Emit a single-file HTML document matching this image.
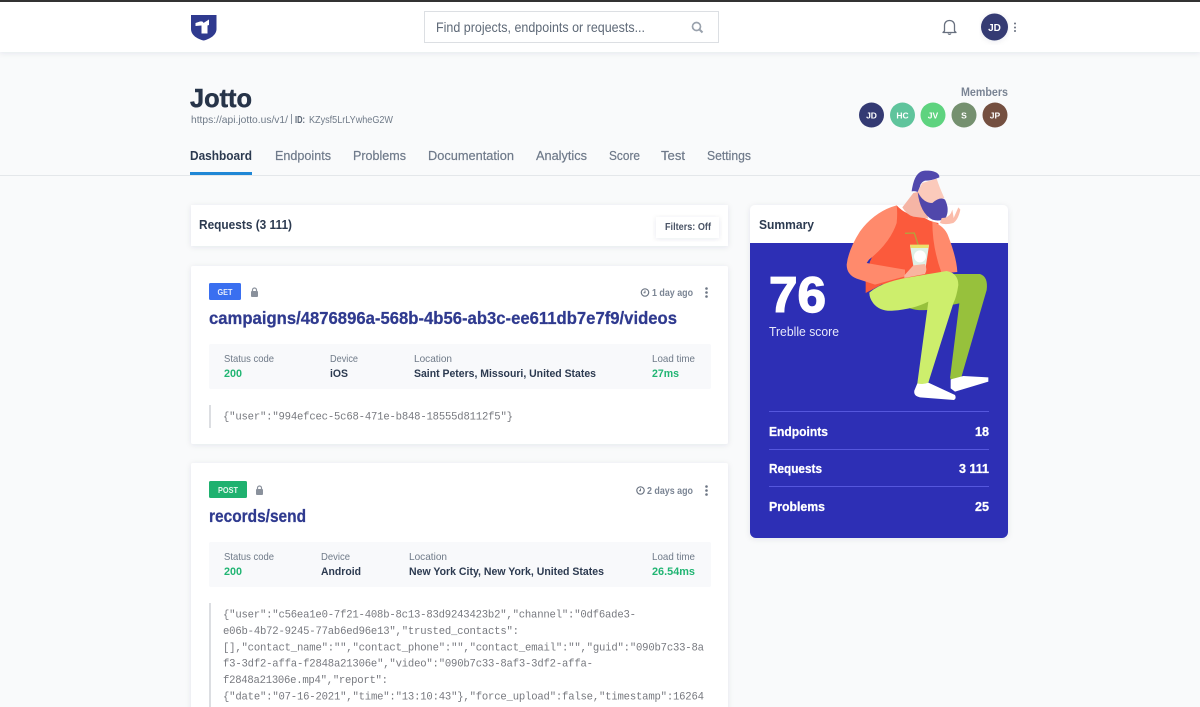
<!DOCTYPE html>
<html><head><meta charset="utf-8"><title>Jotto</title>
<style>
html,body{margin:0;padding:0;background:#f9fafb;width:1200px;height:707px;overflow:hidden}
svg{display:block;filter:blur(.3px)}
text{font-family:"Liberation Sans",sans-serif}
.b{font-weight:700}
.m{font-family:"Liberation Mono",monospace;font-size:10.6px;fill:#77797f}
.l{font-size:10.5px;fill:#6f7a88}
.v{font-size:11px;font-weight:700;fill:#2c3a50}
.g{font-size:11px;font-weight:700;fill:#21b573}
.t{font-size:13px;fill:#6f7a8a;stroke:#6f7a8a;stroke-width:.2px}
.w{fill:#fff;font-weight:700;font-size:13px;stroke:#fff;stroke-width:.25px}
.a{fill:#fff;font-weight:700;font-size:8.5px;text-anchor:middle}
</style></head><body>
<svg width="1200" height="707" viewBox="0 0 1200 707" xmlns="http://www.w3.org/2000/svg">
<defs>
<filter id="s" x="-5%" y="-10%" width="110%" height="125%"><feDropShadow dx="0" dy="1" stdDeviation="3" flood-color="#1c2a4a" flood-opacity=".09"/></filter>
<clipPath id="sumclip"><path d="M750 243H1008V532a6 6 0 0 1-6 6H756a6 6 0 0 1-6-6Z"/></clipPath>
</defs>
<rect width="1200" height="707" fill="#f9fafb"/>
<rect width="1200" height="52" fill="#fff" filter="url(#s)"/>
<rect width="1200" height="2" fill="#333"/>
<!-- logo -->
<path d="M191 15H216.500V29C216.500 35 210 39 203.700 40.500C197 39 191 35 191 29Z" fill="#2f3a8f"/>
<path d="M195.500 23L200 21.500Q203 21 203.500 23L209 19.500V25L207.500 25.500V33.500H201.500V25.500L195.500 26Z" fill="#fff"/>
<!-- search -->
<rect x="424.500" y="11.500" width="294" height="31" fill="#fff" stroke="#dcdfe3"/>
<text x="436" y="32" font-size="14" fill="#5f6a78" textLength="209" lengthAdjust="spacingAndGlyphs">Find projects, endpoints or requests...</text>
<circle cx="696.500" cy="26.500" r="4" fill="none" stroke="#9aa2ad" stroke-width="1.700"/>
<path d="M699.500 29.500L702.500 32.500" stroke="#9aa2ad" stroke-width="2"/>
<!-- bell -->
<path d="M944.500 31V25.500C944.500 22.500 946.500 20.500 949.500 20.500C952.500 20.500 954.500 22.500 954.500 25.500V31L956 32.500H943Z" fill="none" stroke="#68707f" stroke-width="1.300" stroke-linejoin="round"/>
<path d="M948 33.500a1.700 1.700 0 0 0 3 0" fill="none" stroke="#68707f" stroke-width="1.200"/>
<!-- user avatar -->
<circle cx="994.500" cy="27" r="13.500" fill="#343a73" filter="url(#s)"/>
<text x="994.500" y="31" class="a" style="font-size:10px">JD</text>
<circle cx="1015" cy="23.500" r="1" fill="#68707f"/><circle cx="1015" cy="27.500" r="1" fill="#68707f"/><circle cx="1015" cy="31" r="1" fill="#68707f"/>
<!-- title -->
<text x="190" y="107" class="b" font-size="26" fill="#273449" stroke="#273449" stroke-width=".5" textLength="62" lengthAdjust="spacingAndGlyphs">Jotto</text>
<text x="191" y="123" font-size="10.500" fill="#6f7a88" textLength="97" lengthAdjust="spacingAndGlyphs">https://api.jotto.us/v1/</text>
<rect x="291" y="114" width="1" height="10" fill="#8a93a0"/>
<text x="295" y="123" font-size="10.500" fill="#5a6574" class="b" textLength="10" lengthAdjust="spacingAndGlyphs">ID:</text>
<text x="309" y="123" font-size="10.500" fill="#6f7a88" textLength="84" lengthAdjust="spacingAndGlyphs">KZysf5LrLYwheG2W</text>
<!-- members -->
<text x="961" y="96" class="b" font-size="12" fill="#7a8494" textLength="47" lengthAdjust="spacingAndGlyphs">Members</text>
<circle cx="871.500" cy="115" r="12.500" fill="#343a73"/><text x="871.500" y="118.500" class="a">JD</text>
<circle cx="902.500" cy="115" r="12.500" fill="#5fc49c"/><text x="902.500" y="118.500" class="a">HC</text>
<circle cx="933" cy="115" r="12.500" fill="#5ed37f"/><text x="933" y="118.500" class="a">JV</text>
<circle cx="964" cy="115" r="12.500" fill="#75906f"/><text x="964" y="118.500" class="a">S</text>
<circle cx="995" cy="115" r="12.500" fill="#744f40"/><text x="995" y="118.500" class="a">JP</text>
<!-- tabs -->
<rect y="175" width="1200" height="1" fill="#e4e7ea"/>
<text x="190" y="160" class="b" font-size="13" fill="#2c3a50" textLength="62" lengthAdjust="spacingAndGlyphs">Dashboard</text>
<rect x="190" y="172" width="62" height="3" fill="#1f87d6"/>
<text x="275" y="160" class="t" textLength="56" lengthAdjust="spacingAndGlyphs">Endpoints</text>
<text x="353" y="160" class="t" textLength="53" lengthAdjust="spacingAndGlyphs">Problems</text>
<text x="428" y="160" class="t" textLength="86" lengthAdjust="spacingAndGlyphs">Documentation</text>
<text x="536" y="160" class="t" textLength="51" lengthAdjust="spacingAndGlyphs">Analytics</text>
<text x="609" y="160" class="t" textLength="31" lengthAdjust="spacingAndGlyphs">Score</text>
<text x="661" y="160" class="t" textLength="24" lengthAdjust="spacingAndGlyphs">Test</text>
<text x="707" y="160" class="t" textLength="44" lengthAdjust="spacingAndGlyphs">Settings</text>
<!-- requests header -->
<rect x="191" y="205" width="537" height="41" fill="#fff" filter="url(#s)"/>
<text x="199" y="229" class="b" font-size="13" fill="#2c3a50" textLength="93" lengthAdjust="spacingAndGlyphs">Requests (3 111)</text>
<rect x="656" y="217" width="63" height="21" fill="#fff" filter="url(#s)"/>
<text x="665" y="230" class="b" font-size="10.500" fill="#4a5466" textLength="46" lengthAdjust="spacingAndGlyphs">Filters: Off</text>
<!-- card 1 -->
<rect x="191" y="266" width="537" height="178" rx="2" fill="#fff" filter="url(#s)"/>
<rect x="209" y="283" width="32" height="17" rx="1.500" fill="#3a6ff0"/>
<text x="225" y="295" font-size="8.500" fill="#e8eefc" text-anchor="middle" class="b" textLength="15" lengthAdjust="spacingAndGlyphs">GET</text>
<rect x="251" y="291" width="7" height="6" rx="1" fill="#8a919c"/><path d="M252.500 291.500V290a2 2 0 0 1 4 0V291.500" fill="none" stroke="#8a919c" stroke-width="1.200"/>
<circle cx="645" cy="292.500" r="3.700" fill="none" stroke="#6c7583" stroke-width="1.200"/><path d="M645 290.500V292.800H643.500" fill="none" stroke="#6c7583"/>
<text x="652" y="296" class="b" font-size="10.500" fill="#7b8594" textLength="41" lengthAdjust="spacingAndGlyphs">1 day ago</text>
<circle cx="706.500" cy="288.500" r="1.300" fill="#6c7583"/><circle cx="706.500" cy="292.500" r="1.300" fill="#6c7583"/><circle cx="706.500" cy="296.500" r="1.300" fill="#6c7583"/>
<text x="209" y="324" class="b" font-size="17.500" fill="#2f3a8f" stroke="#2f3a8f" stroke-width=".25" textLength="468" lengthAdjust="spacingAndGlyphs">campaigns/4876896a-568b-4b56-ab3c-ee611db7e7f9/videos</text>
<rect x="209" y="344" width="502" height="45" rx="2" fill="#f8f9fb"/>
<text x="224" y="362" class="l" textLength="50" lengthAdjust="spacingAndGlyphs">Status code</text>
<text x="330" y="362" class="l" textLength="28" lengthAdjust="spacingAndGlyphs">Device</text>
<text x="414" y="362" class="l" textLength="38" lengthAdjust="spacingAndGlyphs">Location</text>
<text x="652" y="362" class="l" textLength="43" lengthAdjust="spacingAndGlyphs">Load time</text>
<text x="224" y="377" class="g" textLength="18" lengthAdjust="spacingAndGlyphs">200</text>
<text x="330" y="377" class="v" textLength="18" lengthAdjust="spacingAndGlyphs">iOS</text>
<text x="414" y="377" class="v" textLength="182" lengthAdjust="spacingAndGlyphs">Saint Peters, Missouri, United States</text>
<text x="652" y="377" class="g" textLength="27" lengthAdjust="spacingAndGlyphs">27ms</text>
<rect x="209" y="405" width="2" height="23" fill="#dcdee2"/>
<text x="223" y="419.500" class="m" textLength="290">{"user":"994efcec-5c68-471e-b848-18555d8112f5"}</text>
<!-- card 2 -->
<rect x="191" y="463" width="537" height="260" rx="2" fill="#fff" filter="url(#s)"/>
<rect x="209" y="481" width="38" height="17" rx="1.500" fill="#1fb16f"/>
<text x="228" y="493" font-size="8.500" fill="#e6f7ee" text-anchor="middle" class="b" textLength="20" lengthAdjust="spacingAndGlyphs">POST</text>
<rect x="256" y="489" width="7" height="6" rx="1" fill="#8a919c"/><path d="M257.500 489.500V488a2 2 0 0 1 4 0V489.500" fill="none" stroke="#8a919c" stroke-width="1.200"/>
<circle cx="640.500" cy="490.500" r="3.700" fill="none" stroke="#6c7583" stroke-width="1.200"/><path d="M640.500 488.500V490.800H639" fill="none" stroke="#6c7583"/>
<text x="647" y="494" class="b" font-size="10.500" fill="#7b8594" textLength="46" lengthAdjust="spacingAndGlyphs">2 days ago</text>
<circle cx="706.500" cy="486.500" r="1.300" fill="#6c7583"/><circle cx="706.500" cy="490.500" r="1.300" fill="#6c7583"/><circle cx="706.500" cy="494.500" r="1.300" fill="#6c7583"/>
<text x="209" y="522" class="b" font-size="17.500" fill="#2f3a8f" stroke="#2f3a8f" stroke-width=".25" textLength="97" lengthAdjust="spacingAndGlyphs">records/send</text>
<rect x="209" y="542" width="502" height="45" rx="2" fill="#f8f9fb"/>
<text x="224" y="560" class="l" textLength="50" lengthAdjust="spacingAndGlyphs">Status code</text>
<text x="321" y="560" class="l" textLength="29" lengthAdjust="spacingAndGlyphs">Device</text>
<text x="409" y="560" class="l" textLength="38" lengthAdjust="spacingAndGlyphs">Location</text>
<text x="652" y="560" class="l" textLength="43" lengthAdjust="spacingAndGlyphs">Load time</text>
<text x="224" y="575" class="g" textLength="18" lengthAdjust="spacingAndGlyphs">200</text>
<text x="321" y="575" class="v" textLength="40" lengthAdjust="spacingAndGlyphs">Android</text>
<text x="409" y="575" class="v" textLength="195" lengthAdjust="spacingAndGlyphs">New York City, New York, United States</text>
<text x="652" y="575" class="g" textLength="43" lengthAdjust="spacingAndGlyphs">26.54ms</text>
<rect x="209" y="603" width="2" height="104" fill="#dcdee2"/>
<text x="223" y="617.500" class="m" textLength="413">{"user":"c56ea1e0-7f21-408b-8c13-83d9243423b2","channel":"0df6ade3-</text>
<text x="223" y="634" class="m" textLength="296">e06b-4b72-9245-77ab6ed96e13","trusted_contacts":</text>
<text x="223" y="650.500" class="m" textLength="481">[],"contact_name":"","contact_phone":"","contact_email":"","guid":"090b7c33-8a</text>
<text x="223" y="666.500" class="m" textLength="370">f3-3df2-affa-f2848a21306e","video":"090b7c33-8af3-3df2-affa-</text>
<text x="223" y="683" class="m" textLength="165">f2848a21306e.mp4","report":</text>
<text x="223" y="699.500" class="m" textLength="481">{"date":"07-16-2021","time":"13:10:43"},"force_upload":false,"timestamp":16264</text>
<!-- summary -->
<rect x="750" y="205" width="258" height="333" rx="5" fill="#fff" filter="url(#s)"/>
<rect x="750" y="243" width="258" height="295" fill="#2d2fb5" clip-path="url(#sumclip)"/>
<text x="759" y="229" class="b" font-size="13" fill="#2c3a50" textLength="55" lengthAdjust="spacingAndGlyphs">Summary</text>
<text x="769" y="312" class="b" font-size="50" fill="#fff" stroke="#fff" stroke-width="1.400" textLength="57" lengthAdjust="spacingAndGlyphs">76</text>
<text x="769" y="336" font-size="13" fill="#e6e7fa" textLength="70" lengthAdjust="spacingAndGlyphs">Treblle score</text>
<rect x="769" y="411" width="220" height="1" fill="#5557dd"/>
<rect x="769" y="449" width="220" height="1" fill="#5557dd"/>
<rect x="769" y="486" width="220" height="1" fill="#5557dd"/>
<text x="769" y="436" class="w" textLength="59" lengthAdjust="spacingAndGlyphs">Endpoints</text>
<text x="975" y="436" class="w" textLength="14" lengthAdjust="spacingAndGlyphs">18</text>
<text x="769" y="473" class="w" textLength="53" lengthAdjust="spacingAndGlyphs">Requests</text>
<text x="959" y="473" class="w" textLength="30" lengthAdjust="spacingAndGlyphs">3 111</text>
<text x="769" y="511" class="w" textLength="56" lengthAdjust="spacingAndGlyphs">Problems</text>
<text x="975" y="511" class="w" textLength="14" lengthAdjust="spacingAndGlyphs">25</text>
<!-- character upper -->
<g transform="translate(845 168) scale(.33333)">
<path d="M155 112Q185 145 228 142Q250 160 280 165L295 320L110 350L62 375L62 340L75 280Z" fill="#fb5a3c"/>
<path d="M172 118L205 75L225 70L250 152L205 146Q185 140 172 118Z" fill="#f5b5a5"/>
<path d="M218 70L232 45L275 32Q284 60 298 90L262 105L240 105Z" fill="#fbcabb"/>
<path d="M200 70C205 40 212 10 240 8C265 6 285 15 283 28Q260 38 240 38Q228 42 225 55L218 72Q210 68 200 70Z" fill="#5148ad"/>
<path d="M218 72Q235 105 262 105Q285 85 300 95Q315 125 302 150Q285 162 262 155Q225 135 218 72Z" fill="#5047ab"/>
<path d="M290 150Q310 150 318 135L322 125L326 150L340 118L346 125Q340 155 325 165Q300 172 285 165Z" fill="#fbbcaa"/>
<path d="M262 160Q300 175 310 205Q335 270 337 312L290 316Q262 240 262 160Z" fill="#ff8a6c"/>
<path d="M155 112Q90 130 45 190Q10 245 5 290Q5 320 35 332L90 350L180 325L180 305Q120 295 65 285L72 275Q135 225 155 165Q158 135 155 112Z" fill="#ff8a6c"/>
<path d="M180 196L208 195L220 232" fill="none" stroke="#b5a23c" stroke-width="4"/>
<path d="M195 232H252L240 312H208Z" fill="#dff0e6"/>
<path d="M195 230H252L250 240H197Z" fill="#ece06a"/>
<circle cx="225" cy="265" r="18" fill="#fff"/>
<path d="M178 322L205 292L240 288Q248 305 240 318L178 330Z" fill="#f8b5a0"/>
</g>
<!-- character lower -->
<g transform="translate(860 270) scale(.33333)">
<path d="M200 12L360 12Q385 20 380 60L303 325Q285 335 270 325L298 100L200 120Q170 122 150 115Z" fill="#97c13c"/>
<path d="M272 328L310 318L385 322L385 335L285 365L272 355Z" fill="#fff"/>
<path d="M172 340L205 338L285 375Q290 385 282 390L180 382Q160 378 163 362Z" fill="#fff"/>
<path d="M28 68Q60 40 130 25L260 3Q295 10 295 45Q290 80 280 100L205 338Q190 345 172 340L205 95Q160 118 100 122Q60 125 40 100Q28 85 28 68Z" fill="#cdee6c"/>
</g>
</svg>
</body></html>
